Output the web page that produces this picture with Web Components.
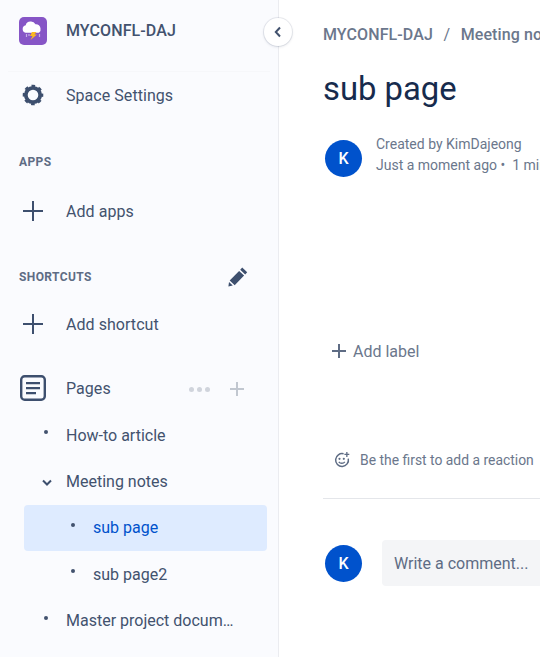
<!DOCTYPE html>
<html>
<head>
<meta charset="utf-8">
<style>
html, body { margin: 0; height: 100%; overflow: hidden; background: #fff; }
body { font-family: Roboto, "Liberation Sans", sans-serif; color: #42526e; }
</style>
</head>
<body>
<app-shell>
  <side-bar slot="side">
    <space-header>MYCONFL-DAJ</space-header>
    <nav-row icon="gear">Space Settings</nav-row>
    <section-title style="margin-top:36px">APPS</section-title>
    <nav-row icon="plus" style="margin-top:18px">Add apps</nav-row>
    <section-title edit style="margin-top:35px">SHORTCUTS</section-title>
    <nav-row icon="plus" style="margin-top:16px">Add shortcut</nav-row>
    <nav-row icon="pages" actions style="margin-top:18px">Pages</nav-row>
    <tree-row marker="dot" style="margin-top:1px">How-to article</tree-row>
    <tree-row marker="chevron">Meeting notes</tree-row>
    <tree-row marker="dot" level="1" selected>sub page</tree-row>
    <tree-row marker="dot" level="1">sub page2</tree-row>
    <tree-row marker="dot">Master project docum…</tree-row>
  </side-bar>
  <page-view slot="main"></page-view>
</app-shell>

<script>
const icons = {
    gear: `<svg width="24" height="24" viewBox="0 0 24 24"><g fill="none" stroke="#3d4f6e"><circle cx="12" cy="12" r="7.2" stroke-width="3.8"/><circle cx="12" cy="12" r="9.2" stroke-width="2.2" stroke-dasharray="3.6 3.63" stroke-dashoffset="1.8"/></g></svg>`,
    plus: `<svg width="20" height="20" viewBox="0 0 20 20"><path fill="#3d4f6e" d="M9 0h2v9h9v2h-9v9H9v-9H0V9h9z"/></svg>`,
    pages: `<svg width="26" height="26" viewBox="0 0 26 26"><rect x="1.2" y="1.2" width="23.6" height="23.6" rx="3.5" fill="none" stroke="#3d4f6e" stroke-width="2.4"/><path fill="#3d4f6e" d="M6 7h14v2.2H6zM6 12h14v2.2H6zM6 17h10v2.2H6z"/></svg>`,
    chevron: `<svg width="12" height="8" viewBox="0 0 12 8" style="display:block"><path fill="none" stroke="#3d4f6e" stroke-width="2" d="M2 1.5l4 4 4-4"/></svg>`,
    pencil: `<svg width="20" height="20" viewBox="0 0 20 20"><path fill="#3d4f6e" d="M14.2 0.6l5 4.6-2 2.2-5-4.6zM11.1 4l5 4.6-9.4 9.6-5-4.6zM1 15l3.8 3.6-4.4 1z"/></svg>`,
    smile: `<svg width="16" height="16" viewBox="0 0 16 16"><path fill="none" stroke="#5e6c84" stroke-width="1.5" d="M9.6 1.8A6.4 6.4 0 1 0 14.3 6.7"/><circle cx="5.5" cy="6.8" r="1.1" fill="#5e6c84"/><circle cx="9.8" cy="6.8" r="1.1" fill="#5e6c84"/><path fill="none" stroke="#5e6c84" stroke-width="1.4" d="M4.8 9.8c1.4 2 4.6 2 6 0"/><path fill="#5e6c84" d="M12.2 0h1.3v1.8h1.8v1.3h-1.8v1.8h-1.3V3.1h-1.8V1.8h1.8z"/></svg>`,
    logo: `<svg width="28" height="28" viewBox="0 0 28 28"><rect width="28" height="28" rx="5" fill="#8655c6"/><path fill="#fff" d="M6.500 15.700a3.800 3.800 0 0 1 .2-7.400 4.800 4.800 0 0 1 4.800-3.700 5.200 5.200 0 0 1 5 2.600 4.500 4.500 0 0 1 5 4.300 4 4 0 0 1-1.500 4.200z"/><path fill="#fbb91f" d="M13 15h4.500l-2 2.600h2.500l-6.500 5.400 2-4h-2.500z"/><path stroke="#c5aee6" stroke-width="1.200" d="M7.500 17v3M10 17v2M20.500 17v3"/></svg>`
};

class AppShell extends HTMLElement {
    constructor() {
        super();
        this.attachShadow({ mode: 'open' }).innerHTML = `
        <style>
        :host { display: flex; width: 540px; height: 657px; overflow: hidden; position: relative; }
        .side { flex: 0 0 278px; width: 278px; }
        .main { flex: 1 1 0; min-width: 0; }
        .toggle { position: absolute; left: 264px; top: 18px; width: 28px; height: 28px; border-radius: 50%; background: #fff;
            box-shadow: 0 0 0 1px rgba(9,30,66,.08), 0 1px 3px rgba(9,30,66,.13); display: flex; align-items: center; justify-content: center; }
        </style>
        <div class="side"><slot name="side"></slot></div>
        <div class="main"><slot name="main"></slot></div>
        <div class="toggle"><svg width="10" height="12" viewBox="0 0 10 12"><path fill="none" stroke="#42526e" stroke-width="2" d="M7 1.5L2.8 6 7 10.5"/></svg></div>`;
    }
}

class SideBar extends HTMLElement {
    constructor() {
        super();
        this.attachShadow({ mode: 'open' }).innerHTML = `
        <style>
        :host { display: block; box-sizing: border-box; width: 279px; height: 657px; background: #fafbfe; border-right: 1px solid #ebecf0; color: #42526e; overflow: hidden; }
        </style>
        <slot></slot>`;
    }
}

class SpaceHeader extends HTMLElement {
    constructor() {
        super();
        this.attachShadow({ mode: 'open' }).innerHTML = `
        <style>
        :host { display: flex; align-items: center; box-sizing: border-box; height: 72px; margin: 0 8px; padding: 0 11px 9px; gap: 19px; border-bottom: 1px solid #f6f7fa; font-size: 16px; font-weight: 500; letter-spacing: .1px; color: #42526e; }
        .logo { height: 28px; }
        .name { margin-bottom: 1px; }
        </style>
        <div class="logo">${icons.logo}</div><div class="name"><slot></slot></div>`;
    }
}

class NavRow extends HTMLElement {
    connectedCallback() {
        const icon = this.getAttribute('icon');
        const actions = this.hasAttribute('actions');
        this.attachShadow({ mode: 'open' }).innerHTML = `
        <style>
        :host { display: flex; align-items: center; height: 46px; padding-left: 19px; padding-right: 34px; font-size: 16px; letter-spacing: .05px; color: #42526e; }
        .icon { width: 28px; height: 28px; display: flex; align-items: center; justify-content: center; margin-right: 19px; }
        .text { flex: 1; }
        .actions { display: flex; align-items: center; gap: 20px; margin-top: 2px; }
        .dots { display: flex; gap: 3px; }
        .dots i { width: 5px; height: 5px; border-radius: 50%; background: #d0d4dc; }
        </style>
        <div class="icon">${icons[icon]}</div>
        <div class="text"><slot></slot></div>
        ${actions ? `<div class="actions"><div class="dots"><i></i><i></i><i></i></div>
        <svg width="14" height="14" viewBox="0 0 14 14"><path fill="#c1c7d0" d="M6 0h2v6h6v2H8v6H6V8H0V6h6z"/></svg></div>` : ''}`;
    }
}

class SectionTitle extends HTMLElement {
    connectedCallback() {
        this.attachShadow({ mode: 'open' }).innerHTML = `
        <style>
        :host { display: flex; align-items: center; justify-content: space-between; height: 16px; padding: 0 30px 0 19px; font-size: 12px; font-weight: 700; letter-spacing: .4px; color: #5e6c84; }
        .edit { height: 20px; }
        </style>
        <slot></slot>
        ${this.hasAttribute('edit') ? `<div class="edit">${icons.pencil}</div>` : ''}`;
    }
}

class TreeRow extends HTMLElement {
    connectedCallback() {
        const level = Number(this.getAttribute('level') || 0);
        const chevron = this.getAttribute('marker') === 'chevron';
        const selected = this.hasAttribute('selected');
        this.attachShadow({ mode: 'open' }).innerHTML = `
        <style>
        :host { display: flex; align-items: center; box-sizing: border-box; width: 243px; height: 46.4px; margin-left: 24px; padding-left: ${level ? 41 : 14}px; border-radius: 4px;
            font-size: 16px; color: ${selected ? '#0052cc' : '#42526e'}; background: ${selected ? '#deebff' : 'transparent'}; }
        .marker { width: 14px; height: 14px; margin-right: 14px; display: flex; align-items: center; justify-content: center; position: relative; top: -1px; }
        .dot { width: 4px; height: 4px; border-radius: 50%; background: #42526e; position: relative; top: -2px; left: 1px; }
        .chev { position: relative; left: 2px; top: 2px; height: 8px; }
        </style>
        <div class="marker">${chevron ? `<div class="chev">${icons.chevron}</div>` : '<div class="dot"></div>'}</div>
        <slot></slot>`;
    }
}

class UserAvatar extends HTMLElement {
    constructor() {
        super();
        this.attachShadow({ mode: 'open' }).innerHTML = `
        <style>
        :host { display: flex; flex: 0 0 37px; width: 37px; height: 37px; border-radius: 50%; background: #0052cc; color: #fff; align-items: center; justify-content: center; font-size: 16px; font-weight: 500; }
        </style>
        <slot></slot>`;
    }
}

class PageView extends HTMLElement {
    constructor() {
        super();
        this.attachShadow({ mode: 'open' }).innerHTML = `
        <style>
        :host { display: block; padding: 25px 0 0 45px; width: 262px; box-sizing: border-box; overflow: hidden; height: 657px; }
        .crumbs { white-space: nowrap; font-size: 16px; font-weight: 500; letter-spacing: .1px; color: #6b778c; height: 20px; line-height: 20px; display: flex; width: 400px; }
        .crumbs .sep { font-weight: 400; margin: 0 10.5px; }
        h1 { margin: 25px 0 0; font-size: 32.8px; font-weight: 400; line-height: 38px; color: #172b4d; }
        .byline { display: flex; align-items: flex-start; gap: 14px; margin: 32px 0 0 2px; width: 400px; height: 37px; }
        .meta { font-size: 14px; line-height: 21px; color: #6b778c; white-space: nowrap; margin-top: -6px; }
        .label { display: flex; align-items: center; gap: 7px; margin: 164px 0 0 9px; font-size: 16px; color: #6b778c; height: 20px; }
        .reaction { display: flex; align-items: center; gap: 10px; margin: 89px 0 0 11px; font-size: 13.9px; color: #6b778c; white-space: nowrap; width: 400px; height: 20px; }
        hr { border: 0; border-top: 1px solid #e4e6ea; margin: 28px 0 0; width: 400px; }
        .comment { display: flex; align-items: center; gap: 20px; margin: 41px 0 0 2px; width: 400px; }
        .box { flex: 1; height: 46px; background: #f4f5f7; border-radius: 4px; display: flex; align-items: center; padding-left: 12px; font-size: 16px; color: #5e6c84; }
        </style>
        <div class="crumbs"><span>MYCONFL-DAJ</span><span class="sep">/</span><span>Meeting notes</span></div>
        <h1>sub page</h1>
        <div class="byline">
            <user-avatar>K</user-avatar>
            <div class="meta">Created by KimDajeong<br>Just a moment ago •&nbsp; 1 min read</div>
        </div>
        <div class="label"><svg width="14" height="14" viewBox="0 0 14 14"><path fill="#5e6c84" d="M6 0h2v6h6v2H8v6H6V8H0V6h6z"/></svg>Add label</div>
        <div class="reaction">${icons.smile}<span>Be the first to add a reaction</span></div>
        <hr>
        <div class="comment"><user-avatar>K</user-avatar><div class="box">Write a comment...</div></div>`;
    }
}

customElements.define('user-avatar', UserAvatar);
customElements.define('section-title', SectionTitle);
customElements.define('space-header', SpaceHeader);
customElements.define('nav-row', NavRow);
customElements.define('tree-row', TreeRow);
customElements.define('side-bar', SideBar);
customElements.define('page-view', PageView);
customElements.define('app-shell', AppShell);
</script>
</body>
</html>
